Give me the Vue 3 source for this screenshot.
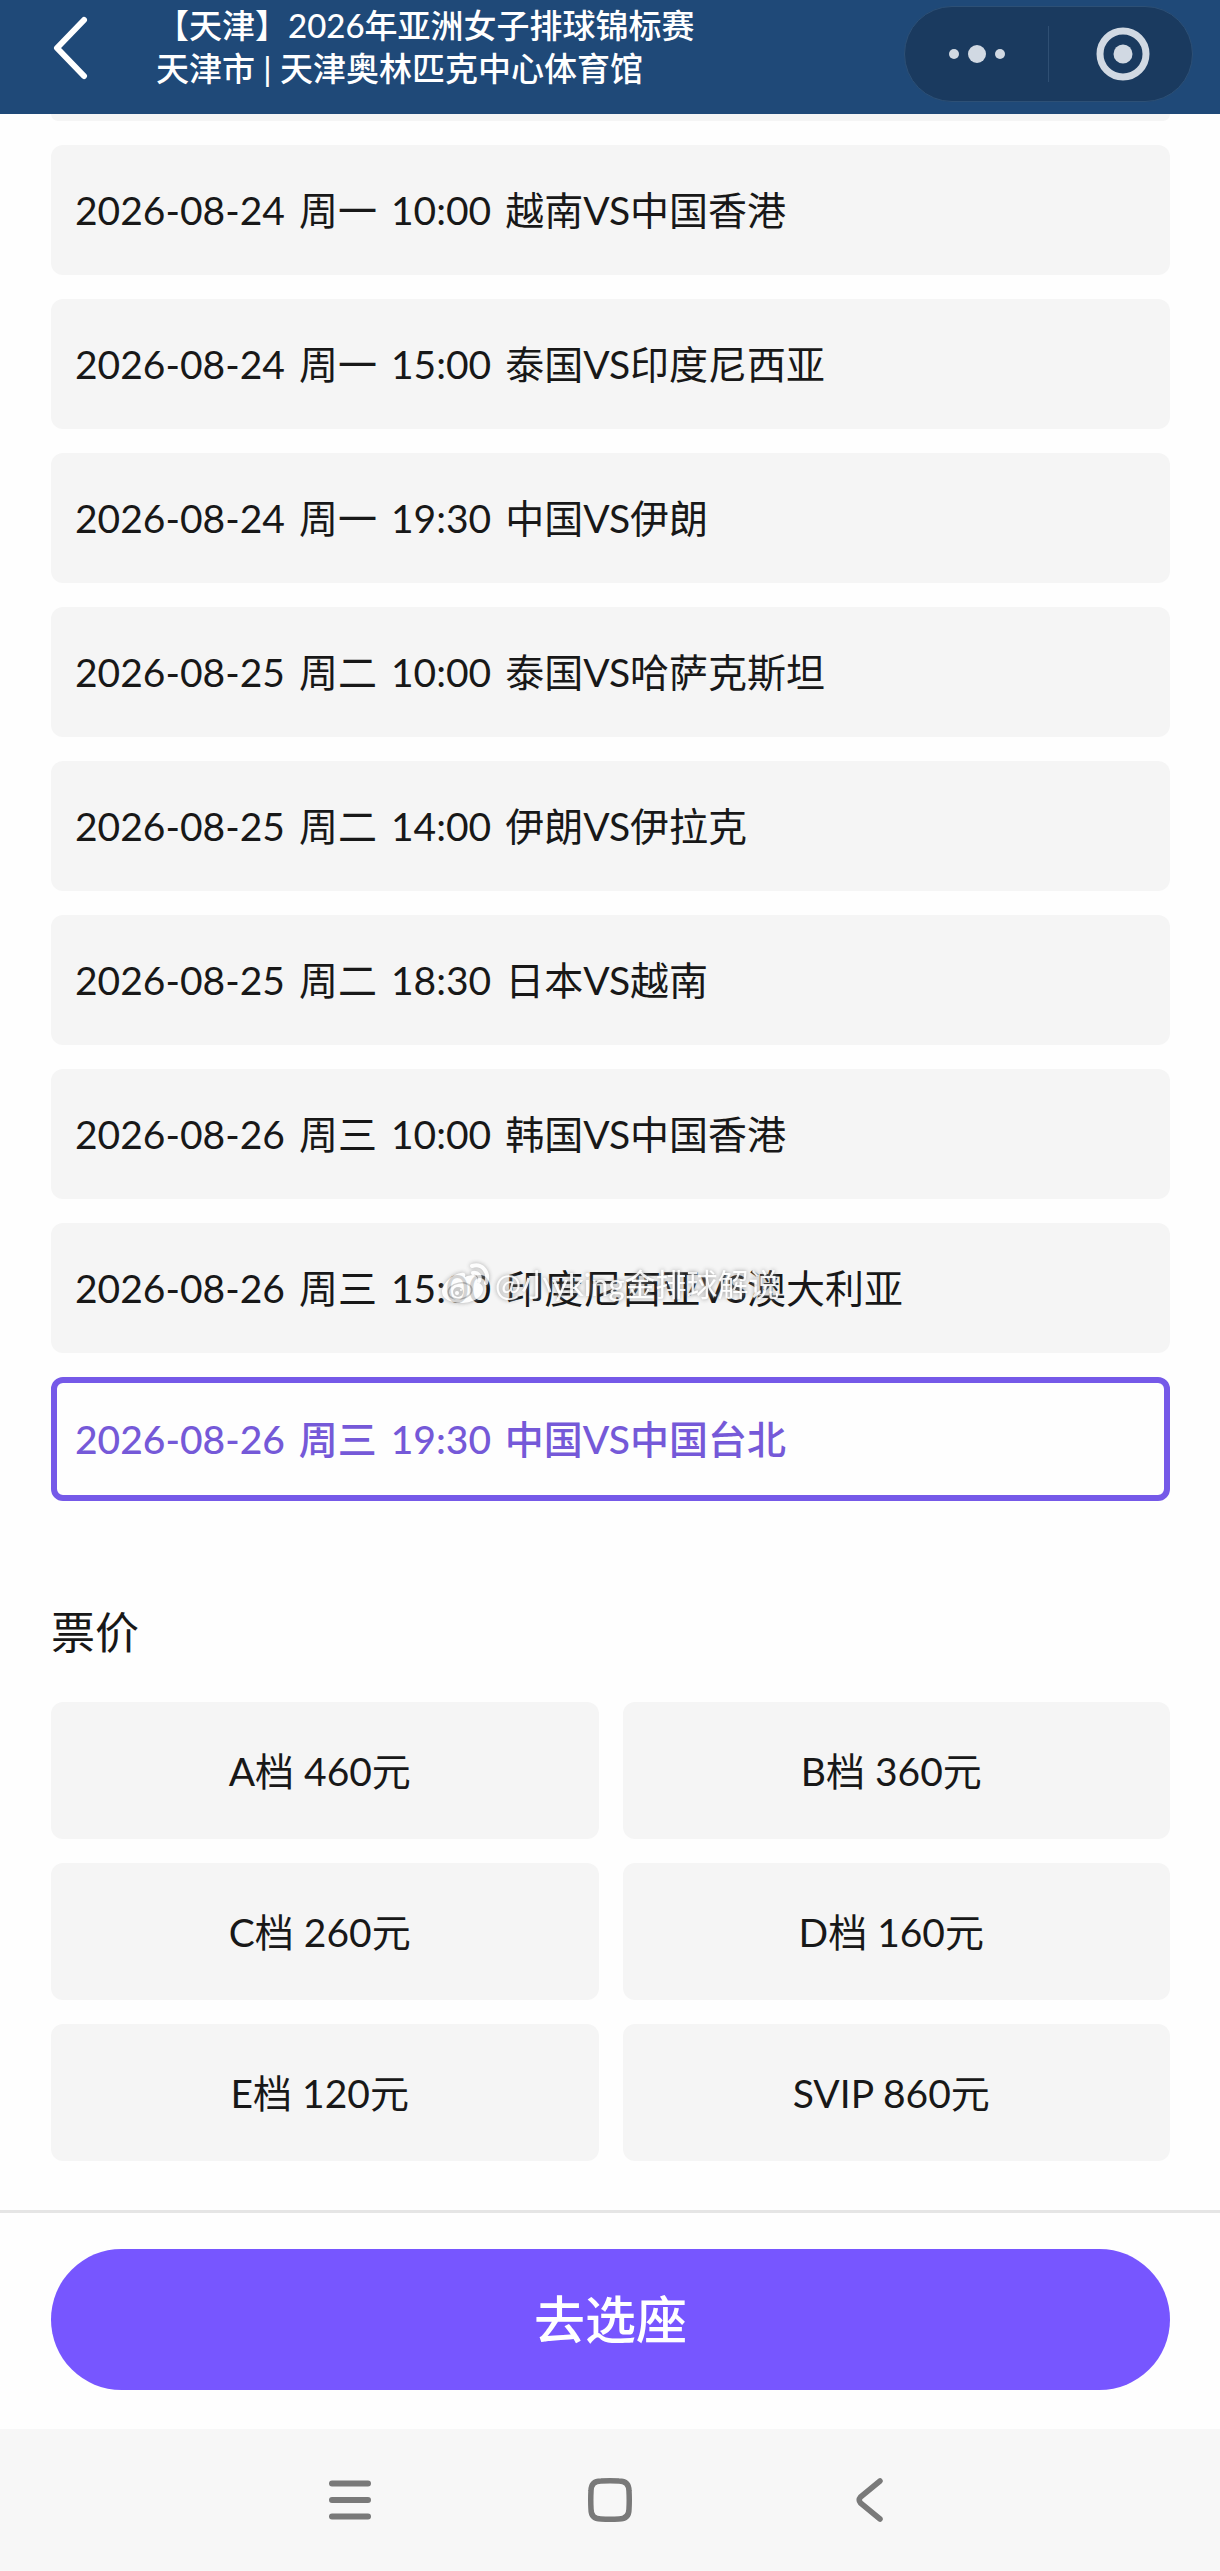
<script setup>
import { ref } from 'vue'

const sessions = [
  ['2026-08-24', '周一', '10:00', '越南VS中国香港'],
  ['2026-08-24', '周一', '15:00', '泰国VS印度尼西亚'],
  ['2026-08-24', '周一', '19:30', '中国VS伊朗'],
  ['2026-08-25', '周二', '10:00', '泰国VS哈萨克斯坦'],
  ['2026-08-25', '周二', '14:00', '伊朗VS伊拉克'],
  ['2026-08-25', '周二', '18:30', '日本VS越南'],
  ['2026-08-26', '周三', '10:00', '韩国VS中国香港'],
  ['2026-08-26', '周三', '15:00', '印度尼西亚VS澳大利亚'],
  ['2026-08-26', '周三', '19:30', '中国VS中国台北'],
]
const prices = ['A档 460元', 'B档 360元', 'C档 260元', 'D档 160元', 'E档 120元', 'SVIP 860元']
const selected = ref(8)
const watermarked = 7
</script>

<template>
  <div class="page">
    <header class="header">
      <button class="back" type="button" aria-label="返回">
        <svg width="36" height="64" viewBox="0 0 36 64" fill="none" stroke="#fff" stroke-width="6" stroke-linecap="round" stroke-linejoin="round">
          <path d="M32 4 5 32 32 60" />
        </svg>
      </button>
      <div class="heading">
        <h1>【天津】2026年亚洲女子排球锦标赛</h1>
        <p>天津市 | 天津奥林匹克中心体育馆</p>
      </div>
      <div class="capsule">
        <button class="more" type="button" aria-label="更多">
          <svg width="58" height="20" viewBox="0 0 58 20" fill="#d1d9e3">
            <circle cx="6" cy="10" r="5" /><circle cx="29" cy="10" r="9" /><circle cx="52" cy="10" r="5" />
          </svg>
        </button>
        <button class="close" type="button" aria-label="关闭">
          <svg width="54" height="54" viewBox="0 0 54 54">
            <circle cx="27" cy="27" r="23" fill="none" stroke="#d1d9e3" stroke-width="7" />
            <circle cx="27" cy="27" r="9.5" fill="#d1d9e3" />
          </svg>
        </button>
      </div>
    </header>

    <main class="content">
      <div class="cut-card"></div>
      <ul class="sessions">
        <li v-for="(fields, i) in sessions" :key="i">
          <button class="session" :class="{ active: i === selected }" type="button" @click="selected = i">
            <span v-for="f in fields" :key="f" class="field">{{ f + ' ' }}</span>
          </button>
          <div v-if="i === watermarked" class="watermark">
            <svg width="50" height="42" viewBox="0 0 50 42">
              <path d="M20 10C11 11 1 21 1 29c0 7 9 11 19 11 12 0 22-6 22-14 0-4-3-6-6-7 1-4 0-7-4-7-3 0-6 1-8 2 1-3 0-5-4-4z" fill="#fff" />
              <ellipse cx="19" cy="28" rx="12" ry="8" fill="none" stroke="#c4c4c4" stroke-width="1.5" transform="rotate(-10 19 28)" />
              <circle cx="17" cy="29" r="5" fill="#c0c0c0" /><circle cx="16" cy="30" r="2" fill="#fff" /><circle cx="20" cy="27" r="1" fill="#fff" />
              <path d="M31 3c10-3 18 6 14 17M32 10c5-1 8 3 6 8" fill="none" stroke="#fff" stroke-width="4" stroke-linecap="round" />
            </svg>
            <span>@小yking金排球解说</span>
          </div>
        </li>
      </ul>

      <h2>票价</h2>
      <div class="prices">
        <button v-for="p in prices" :key="p" class="price" type="button">{{ p }}</button>
      </div>
    </main>

    <div class="action">
      <button class="submit" type="button">去选座</button>
    </div>

    <nav class="system">
      <button type="button" aria-label="任务">
        <svg width="44" height="44" viewBox="0 0 44 44" stroke="#797979" stroke-width="6" stroke-linecap="round">
          <path d="M4 5.500H40M4 22H40M4 38.500H40" />
        </svg>
      </button>
      <button type="button" aria-label="主屏幕">
        <svg width="44" height="44" viewBox="0 0 44 44" fill="none" stroke="#797979" stroke-width="5.500">
          <path d="M13 3Q22 2.500 31 3Q41 3 41 13Q41.500 22 41 31Q41 41 31 41Q22 41.500 13 41Q3 41 3 31Q2.500 22 3 13Q3 3 13 3Z" />
        </svg>
      </button>
      <button type="button" aria-label="后退">
        <svg width="44" height="44" viewBox="0 0 44 44" fill="none" stroke="#797979" stroke-width="5.500" stroke-linecap="round">
          <path d="M32 3 12.500 19Q10 22 12.500 25L32 41" />
        </svg>
      </button>
    </nav>
  </div>
</template>

<style>
body {
  margin: 0;
  background: #fefefe;
}
</style>

<style scoped>
.page {
  display: flex;
  flex-direction: column;
  min-height: 100vh;
  font-family: Lato, "Noto Sans CJK SC", sans-serif;
  color: #181818;
}
button {
  margin: 0;
  padding: 0;
  border: 0;
  background: none;
  font: inherit;
  color: inherit;
  cursor: pointer;
}
svg {
  display: block;
}
.header {
  display: flex;
  align-items: flex-start;
  height: 114px;
  padding-right: 27px;
  background: #1f4978;
  color: #fff;
}
.back {
  padding: 16px 68px 0 52px;
}
.heading {
  flex: 1;
  padding-top: 4px;
  white-space: nowrap;
}
.heading h1,
.heading p {
  margin: 0;
  font-size: 33px;
  line-height: 43px;
  font-weight: 500;
}
.capsule {
  display: flex;
  align-items: center;
  box-sizing: border-box;
  width: 289px;
  height: 96px;
  margin-top: 6px;
  border: 1px solid #2d5076;
  border-radius: 48px;
  background: #1a3a5f;
}
.capsule button {
  display: flex;
  align-items: center;
  justify-content: center;
  height: 56px;
}
.capsule .more {
  width: 143px;
}
.capsule .close {
  flex: 1;
  padding-left: 4px;
  border-left: 1px solid #2f4f73;
}
.content {
  padding: 0 50px 49px 51px;
}
.cut-card {
  height: 7px;
  margin-bottom: 24px;
  border-radius: 0 0 12px 12px;
  background: #f5f5f5;
}
.sessions {
  display: flex;
  flex-direction: column;
  gap: 24px;
  margin: 0;
  padding: 0;
  list-style: none;
}
.sessions li {
  position: relative;
}
.session {
  display: block;
  box-sizing: border-box;
  width: 100%;
  height: 130px;
  padding: 0 24px;
  border-radius: 12px;
  background: #f5f5f5;
  font-size: 39px;
  line-height: 56px;
  text-align: left;
}
.field + .field {
  margin-left: 4px;
}
.session.active {
  height: 124px;
  padding: 0 18px;
  border: 6px solid #7559e8;
  background: #fefefe;
  color: #7559d8;
  font-weight: 500;
}
.watermark {
  position: absolute;
  top: 40px;
  left: 390px;
  display: flex;
  align-items: center;
  gap: 4px;
  color: #fff;
  font-size: 31px;
  line-height: 42px;
  white-space: nowrap;
  text-shadow: 0 0 4px #888;
  opacity: 0.92;
  pointer-events: none;
}
.watermark svg {
  opacity: 0.88;
  filter: drop-shadow(0 0 2px #999);
}
h2 {
  margin: 98px 0 37px;
  font-size: 44px;
  line-height: 66px;
  font-weight: 400;
}
.prices {
  display: grid;
  grid-template-columns: 1fr 1fr;
  gap: 24px;
}
.price {
  height: 137px;
  padding: 0 10px 4px 0;
  border-radius: 12px;
  background: #f5f5f5;
  font-size: 39px;
}
.action {
  padding: 36px 50px 39px 51px;
  border-top: 3px solid #e5e5e5;
}
.submit {
  width: 100%;
  height: 141px;
  padding-bottom: 6px;
  border-radius: 71px;
  background: #7756ff;
  color: #fff;
  font-size: 51px;
  font-weight: 500;
}
.system {
  display: flex;
  flex: 1;
  align-items: center;
  justify-content: center;
  gap: 216px;
  min-height: 142px;
  background: #f7f7f7;
}
</style>
